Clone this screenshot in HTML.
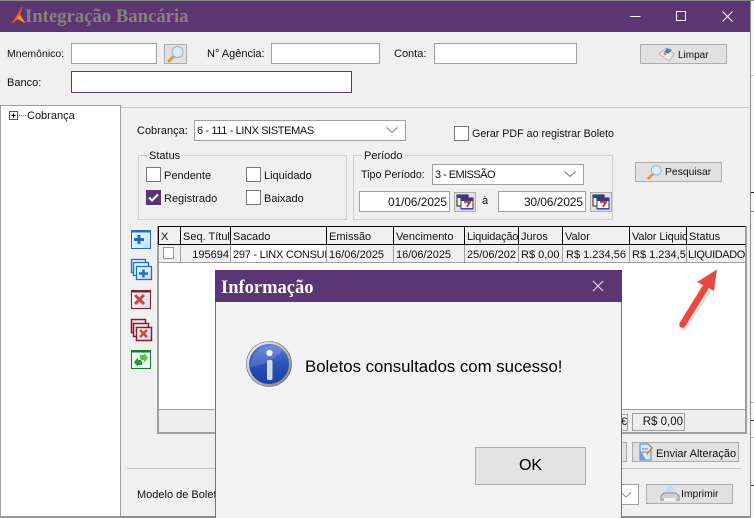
<!DOCTYPE html>
<html><head><meta charset="utf-8"><style>
*{box-sizing:border-box}
html,body{margin:0;padding:0}
body{width:754px;height:518px;overflow:hidden;position:relative;background:#f7f7f7;font:11px/14px "Liberation Sans",sans-serif;color:#111}
div,span.a,svg{position:absolute}
.t{white-space:nowrap;line-height:14px;height:14px}
.i{background:#fff;border:1px solid #a0a0a0}
.b{background:#e1e1e1;border:1px solid #adadad}
.c{background:#fff;border:1px solid #7a7a7a}
.g{border:1px solid #d0d0d0}
.h{background:#f0f0f0;border-right:1px solid #000;border-bottom:1px solid #000;border-top:1px solid #000;height:19px;padding:3px 0 0 2px;white-space:nowrap;overflow:hidden;line-height:14px}
.r{background:#f0f0f0;border-right:1px solid #a0a0a0;border-bottom:1px solid #a0a0a0;height:18px;padding:2px 1px 0 2px;white-space:nowrap;overflow:hidden;line-height:14px}
</style></head><body>
<div style="left:0;top:0;width:751px;height:518px;background:#f0f0f0;border-right:1px solid #8f8f8f;border-bottom:2px solid #8f8f8f"></div>
<div style="left:0;top:0;width:754px;height:1px;background:#8c8c8c"></div>
<div style="left:0;top:1px;width:750px;height:31px;background:#5b3673"></div>
<!-- right desktop edge -->
<div style="left:751px;top:75px;width:3px;height:1px;background:#ccc"></div>
<div style="left:751px;top:192px;width:3px;height:1px;background:#222"></div>
<div style="left:751px;top:211px;width:3px;height:1px;background:#888"></div>
<div style="left:751px;top:402px;width:3px;height:1px;background:#bbb"></div>
<div style="left:751px;top:420px;width:3px;height:1px;background:#444"></div>
<div style="left:751px;top:437px;width:3px;height:1px;background:#bbb"></div>
<div style="left:751px;top:485px;width:3px;height:1px;background:#444"></div>
<!-- logo -->
<svg style="left:11px;top:6px" width="16" height="18" viewBox="0 0 16 18"><path d="M11 1 L7 8 L1 17 L7 13 L14 17 L9 9Z" fill="#ee5a2a" stroke="#ee5a2a" stroke-width=".6"/><path d="M6 12 L9 9 L14 17Z" fill="#f59a1f"/></svg>
<div class="t" style="left:25px;top:7px;height:20px;font:bold 18.700px/20px 'Liberation Serif',serif;color:#84847c">Integração Bancária</div>
<!-- window controls -->
<svg style="left:620px;top:0" width="125" height="30" fill="none" stroke="#fff"><path d="M10 16.500H20.500"/><rect x="56.500" y="11.500" width="9" height="9"/><path d="M102.500 11.500l10 10M112.500 11.500l-10 10" stroke-width="1.100"/></svg>
<!-- top fields -->
<div class="t" style="left:7px;top:47px;font-size:10.500px">Mnemônico:</div>
<div class="i" style="left:71px;top:43px;width:86px;height:21px"></div>
<div class="b" style="left:164px;top:44px;width:23px;height:20px"></div>
<svg style="left:166px;top:45px" width="19" height="18" viewBox="0 0 19 18"><path d="M3 16L8.500 10.500" stroke="#dd9a3f" stroke-width="3" stroke-linecap="round"/><circle cx="11.500" cy="7" r="5.500" fill="#dcedf9" stroke="#8fb2cc"/></svg>
<div class="t" style="left:207px;top:47px">N° Agência:</div>
<div class="i" style="left:271px;top:43px;width:109px;height:21px"></div>
<div class="t" style="left:394px;top:47px">Conta:</div>
<div class="i" style="left:434px;top:43px;width:143px;height:21px"></div>
<div class="b" style="left:640px;top:44px;width:87px;height:20px"></div>
<svg style="left:657px;top:45px" width="20" height="18" viewBox="0 0 20 18"><path d="M2 9L9 3l8 6-5 7z" fill="#efefef" stroke="#b5b5b5"/><path d="M7 7l3-4 5 2-4 4z" fill="#4a80c4"/><path d="M7 8l2 2" stroke="#e0662a" stroke-width="1.500"/></svg>
<div class="t" style="left:678px;top:49px;font-size:10px">Limpar</div>
<div class="t" style="left:7px;top:76px">Banco:</div>
<div style="left:71px;top:71px;width:281px;height:22px;background:#fff;border:1px solid #5b3673"></div>
<!-- tree -->
<div style="left:121px;top:107px;width:629px;height:1px;background:#c8c8c8"></div>
<div style="left:0;top:105px;width:121px;height:412px;background:#fff;border:1px solid #a0a0a0"></div>
<svg style="left:8px;top:110px" width="20" height="11"><rect x="1.500" y="1.500" width="8" height="8" fill="#fff" stroke="#555"/><path d="M3.500 5.500h4M5.500 3.500v4" stroke="#000"/><path d="M11 5.500h8" stroke="#777" stroke-dasharray="1 1"/></svg>
<div class="t" style="left:27px;top:109px">Cobrança</div>
<!-- cobranca -->
<div class="t" style="left:137px;top:124px">Cobrança:</div>
<div class="i" style="left:194px;top:120px;width:212px;height:21px;padding:3px 2px;line-height:14px;letter-spacing:-.38px">6 - 111 - LINX SISTEMAS</div>
<svg style="left:385px;top:126px" width="14" height="8" fill="none" stroke="#777"><path d="M1.500 1.500l5.500 5 5.500-5"/></svg>
<div class="c" style="left:454px;top:126px;width:15px;height:15px"></div>
<div class="t" style="left:472px;top:127px;font-size:10.700px">Gerar PDF ao registrar Boleto</div>
<!-- status -->
<div class="g" style="left:138px;top:155px;width:209px;height:65px"></div>
<div class="t" style="left:147px;top:149px;background:#f0f0f0;padding:0 2px">Status</div>
<div class="c" style="left:146px;top:167px;width:15px;height:15px"></div>
<div class="t" style="left:164px;top:169px">Pendente</div>
<div class="c" style="left:246px;top:167px;width:15px;height:15px"></div>
<div class="t" style="left:264px;top:169px">Liquidado</div>
<div style="left:146px;top:190px;width:15px;height:15px;background:#5b3673"></div>
<svg style="left:146px;top:190px" width="15" height="15" fill="none" stroke="#fff" stroke-width="2"><path d="M3 7.500l3 3 6-6"/></svg>
<div class="t" style="left:164px;top:192px">Registrado</div>
<div class="c" style="left:246px;top:190px;width:15px;height:15px"></div>
<div class="t" style="left:264px;top:192px">Baixado</div>
<!-- periodo -->
<div class="g" style="left:353px;top:155px;width:260px;height:65px"></div>
<div class="t" style="left:362px;top:149px;background:#f0f0f0;padding:0 2px">Período</div>
<div class="t" style="left:361px;top:168px;font-size:10.700px">Tipo Período:</div>
<div class="i" style="left:432px;top:164px;width:152px;height:21px;padding:3px 2px;line-height:14px;letter-spacing:-.55px">3 - EMISSÃO</div>
<svg style="left:563px;top:170px" width="14" height="8" fill="none" stroke="#777"><path d="M1.500 1.500l5.500 5 5.500-5"/></svg>
<div class="i" style="left:359px;top:191px;width:91px;height:21px;padding:3px 2px;line-height:14px;text-align:right;font-size:11.800px">01/06/2025</div>
<div class="b" style="left:454px;top:192px;width:22px;height:20px"></div>
<svg style="left:456px;top:194px" width="18" height="16" viewBox="0 0 18 16"><rect x="1" y="1" width="11" height="11" fill="#f4f4ff" stroke="#222"/><rect x="1" y="1" width="11" height="3" fill="#2a3f9e"/><rect x="5" y="4" width="12" height="11" fill="#fff" stroke="#333"/><rect x="5" y="4" width="12" height="3" fill="#3a3a7a"/><path d="M5 14.500h12" stroke="#2a50d0"/><path d="M8 8h6l-3 5" fill="none" stroke="#d22" stroke-width="1.800"/></svg>
<div class="t" style="left:482px;top:194px">à</div>
<div class="i" style="left:498px;top:191px;width:88px;height:21px;padding:3px 2px;line-height:14px;text-align:right;font-size:11.800px">30/06/2025</div>
<div class="b" style="left:590px;top:192px;width:22px;height:20px"></div>
<svg style="left:592px;top:194px" width="18" height="16" viewBox="0 0 18 16"><rect x="1" y="1" width="11" height="11" fill="#f4f4ff" stroke="#222"/><rect x="1" y="1" width="11" height="3" fill="#2a3f9e"/><rect x="5" y="4" width="12" height="11" fill="#fff" stroke="#333"/><rect x="5" y="4" width="12" height="3" fill="#3a3a7a"/><path d="M5 14.500h12" stroke="#2a50d0"/><path d="M8 8h6l-3 5" fill="none" stroke="#d22" stroke-width="1.800"/></svg>
<div class="b" style="left:635px;top:162px;width:87px;height:20px"></div>
<svg style="left:646px;top:163px" width="17" height="18" viewBox="0 0 19 18"><path d="M3 16L8.500 10.500" stroke="#dd9a3f" stroke-width="3" stroke-linecap="round"/><circle cx="11.500" cy="7" r="5.500" fill="#dcedf9" stroke="#8fb2cc"/></svg>
<div class="t" style="left:665px;top:166px;font-size:10.400px">Pesquisar</div>
<!-- side icons -->
<svg style="left:130px;top:229px" width="23" height="142" viewBox="0 0 23 142" fill="none">
<defs><linearGradient id="bl" x1="0" y1="0" x2="1" y2="1"><stop offset="0" stop-color="#fff"/><stop offset="1" stop-color="#bcdcf5"/></linearGradient></defs>
<rect x="1.500" y="1.500" width="19" height="18" fill="url(#bl)" stroke="#1670d0"/><path d="M1.500 2.500h19" stroke="#1670d0" stroke-width="2"/><path d="M4 10.500h10M9 6v9" stroke="#1670d0" stroke-width="3"/>
<rect x="1.500" y="30.500" width="14" height="13" fill="#eaf4fc" stroke="#1670d0" stroke-width="1.300"/><rect x="3.500" y="33.500" width="15" height="13" fill="#eaf4fc" stroke="#1670d0" stroke-width="1.300"/><rect x="6.500" y="37.500" width="15" height="13" fill="url(#bl)" stroke="#1670d0" stroke-width="1.300"/><path d="M9 44.500h9M13.500 40.500v8" stroke="#1670d0" stroke-width="2.500"/>
<rect x="1.500" y="61.500" width="19" height="18" fill="url(#bl)" stroke="#8c1a2a"/><path d="M1.500 62.500h19" stroke="#8c1a2a" stroke-width="2"/><path d="M5 66l9 9M14 66l-9 9" stroke="#d8402f" stroke-width="3"/>
<rect x="1.500" y="90.500" width="14" height="13" fill="#f2e8ea" stroke="#8c1a2a" stroke-width="1.500"/><rect x="3.500" y="94.500" width="15" height="13" fill="#f2e8ea" stroke="#8c1a2a" stroke-width="1.500"/><rect x="6.500" y="98.500" width="15" height="13" fill="url(#bl)" stroke="#8c1a2a" stroke-width="1.500"/><path d="M10 101l7 7M17 101l-7 7" stroke="#d8402f" stroke-width="2.500"/>
<rect x="1.500" y="121.500" width="19" height="18" fill="#e8f5ea" stroke="#0f7a32"/><path d="M1.500 122.500h19" stroke="#0f7a32" stroke-width="2"/><path d="M4 133l4-4.500v2.500h2c1 0 2 1 2 2v3H8v2z" fill="#1c9a3c"/><path d="M18 129l-4 4.500V131h-2c-1 0-2-1-2-2v-3h4v-2z" fill="#55c04c"/>
</svg>
<!-- grid -->
<div style="left:157px;top:226px;width:590px;height:208px;background:#fff;border:2px solid #a0a0a0;border-top:0"></div>
<div style="left:158px;top:226px;width:588px;height:1px;background:#000"></div>
<div class="h" style="left:158px;top:226px;width:23px;border-left:1px solid #000">X</div>
<div class="h" style="left:181px;top:226px;width:50px">Seq. Títul</div>
<div class="h" style="left:231px;top:226px;width:96px">Sacado</div>
<div class="h" style="left:327px;top:226px;width:67px">Emissão</div>
<div class="h" style="left:394px;top:226px;width:71px">Vencimento</div>
<div class="h" style="left:465px;top:226px;width:54px;letter-spacing:-.2px">Liquidação</div>
<div class="h" style="left:519px;top:226px;width:44px">Juros</div>
<div class="h" style="left:563px;top:226px;width:67px">Valor</div>
<div class="h" style="left:630px;top:226px;width:57px;letter-spacing:-.1px">Valor Liquid</div>
<div class="h" style="left:687px;top:226px;width:59px;border-right:1px solid #a0a0a0">Status</div>
<div class="r" style="left:158px;top:245px;width:23px;border-left:1px solid #a0a0a0"></div>
<div style="left:163px;top:247px;width:11px;height:12px;background:#fff;border:1px solid #9a9a9a"></div>
<div class="r" style="left:181px;top:245px;width:50px;text-align:right;padding-top:3px">195694</div>
<div class="r" style="left:231px;top:245px;width:96px;background:#fff;padding-top:3px;letter-spacing:-.25px">297 - LINX CONSUL</div>
<div class="r" style="left:327px;top:245px;width:67px;padding-top:3px">16/06/2025</div>
<div class="r" style="left:394px;top:245px;width:71px;padding-top:3px">16/06/2025</div>
<div class="r" style="left:465px;top:245px;width:54px;padding-top:3px">25/06/202</div>
<div class="r" style="left:519px;top:245px;width:44px;padding-top:3px">R$ 0,00</div>
<div class="r" style="left:563px;top:245px;width:67px;padding:3px 0 0 3px">R$ 1.234,56</div>
<div class="r" style="left:630px;top:245px;width:57px;padding-top:3px">R$ 1.234,5</div>
<div class="r" style="left:687px;top:245px;width:59px;padding:3px 0 0 1px;letter-spacing:-.4px">LIQUIDADO</div>
<!-- footer -->
<div style="left:159px;top:409px;width:586px;height:23px;background:#eee;border-top:1px solid #a0a0a0"></div>
<div class="t" style="left:621px;top:414px;width:7px;height:17px;border:1px solid #a0a0a0;border-left:0;overflow:hidden;text-align:right;line-height:15px;background:#f0f0f0">€</div>
<div style="left:632px;top:413px;width:53px;height:18px;border:1px solid #a0a0a0;text-align:right;padding-right:1px;line-height:16px;font-size:11.500px">R$ 0,00</div>
<!-- bottom -->
<div class="b" style="left:600px;top:442px;width:27px;height:20px"></div>
<div class="b" style="left:632px;top:442px;width:107px;height:20px"></div>
<svg style="left:638px;top:443px" width="16" height="18" viewBox="0 0 16 18"><path d="M2 1h8l3 3v13H2z" fill="#dbe9f6" stroke="#5a86b8"/><path d="M2 17V6l6 11z" fill="#6e9fd2"/><path d="M4 6h6M4 9h6" stroke="#5a86b8"/><path d="M8 11l6-7 1 1-6 7z" fill="#e07a2a"/></svg>
<div class="t" style="left:656px;top:447px">Enviar Alteração</div>
<div style="left:127px;top:468px;width:614px;height:1px;background:#c4c4c4"></div>
<div class="t" style="left:137px;top:488px">Modelo de Boleto</div>
<div class="i" style="left:560px;top:484px;width:79px;height:21px"></div>
<svg style="left:620px;top:491px" width="12" height="8" fill="none" stroke="#888"><path d="M1 1.500l5 4.500 5-4.500"/></svg>
<div class="b" style="left:646px;top:484px;width:87px;height:20px"></div>
<svg style="left:660px;top:485px" width="20" height="18" viewBox="0 0 20 18"><path d="M7 1h6l2 7H5z" fill="#c8dcf2"/><path d="M1 11l3-3h12l3 3v4H1z" fill="#cfcfcf" stroke="#8d8d8d"/><path d="M4 13h12v3H4z" fill="#f2f2f2"/></svg>
<div class="t" style="left:681px;top:488px;font-size:10.400px">Imprimir</div>
<!-- arrow -->
<svg style="left:670px;top:262px" width="60" height="72" viewBox="0 0 60 72"><path d="M13.500 65L37 30" stroke="#777" stroke-width="6.500" stroke-linecap="round" opacity=".25"/><path d="M12.500 62.500L35 26" stroke="#e8493f" stroke-width="6.500" stroke-linecap="round"/><path d="M47 7.500L27 20L44 29Z" fill="#e8493f"/></svg>
<!-- dialog -->
<div style="left:215px;top:270px;width:407px;height:248px;background:#f3f3f3;border:1px solid #8a5cac;border-bottom:0"></div>
<div style="left:215px;top:270px;width:407px;height:32px;background:#5b3673"></div>
<div class="t" style="left:221px;top:278px;height:20px;font:bold 18.500px/20px 'Liberation Serif',serif;color:#fff">Informação</div>
<svg style="left:590px;top:279px" width="16" height="14" fill="none" stroke="#e6e0ea" stroke-width="1.100"><path d="M3 2l10 10M13 2L3 12"/></svg>
<svg style="left:245px;top:340px" width="48" height="48" viewBox="0 0 48 48">
<defs><linearGradient id="ib" x1="0" y1="0" x2="0" y2="1"><stop offset="0" stop-color="#5a80d8"/><stop offset=".5" stop-color="#2a52b8"/><stop offset="1" stop-color="#1c3fb0"/></linearGradient><linearGradient id="ir" x1="0" y1="0" x2="1" y2="1"><stop offset="0" stop-color="#fff"/><stop offset="1" stop-color="#777"/></linearGradient></defs>
<circle cx="24" cy="24" r="22.500" fill="url(#ir)" stroke="#666" stroke-width=".6"/><circle cx="24" cy="24" r="20" fill="url(#ib)"/><path d="M4.500 27C14 26 28 22 38 10 28 2 8 4 4.500 27Z" fill="#fff" opacity=".15"/>
<circle cx="24.500" cy="13" r="3.200" fill="#f0f0f0"/><rect x="22" y="20" width="5.500" height="20" rx="1.500" fill="#d8d8d8"/></svg>
<div class="t" style="left:305px;top:358px;height:20px;line-height:18px;font-size:16.800px;color:#000">Boletos consultados com sucesso!</div>
<div style="left:475px;top:447px;width:111px;height:38px;background:#e3e3e3;border:1px solid #adadad;text-align:center;font-size:16px;line-height:36px;color:#000">OK</div>
</body></html>
